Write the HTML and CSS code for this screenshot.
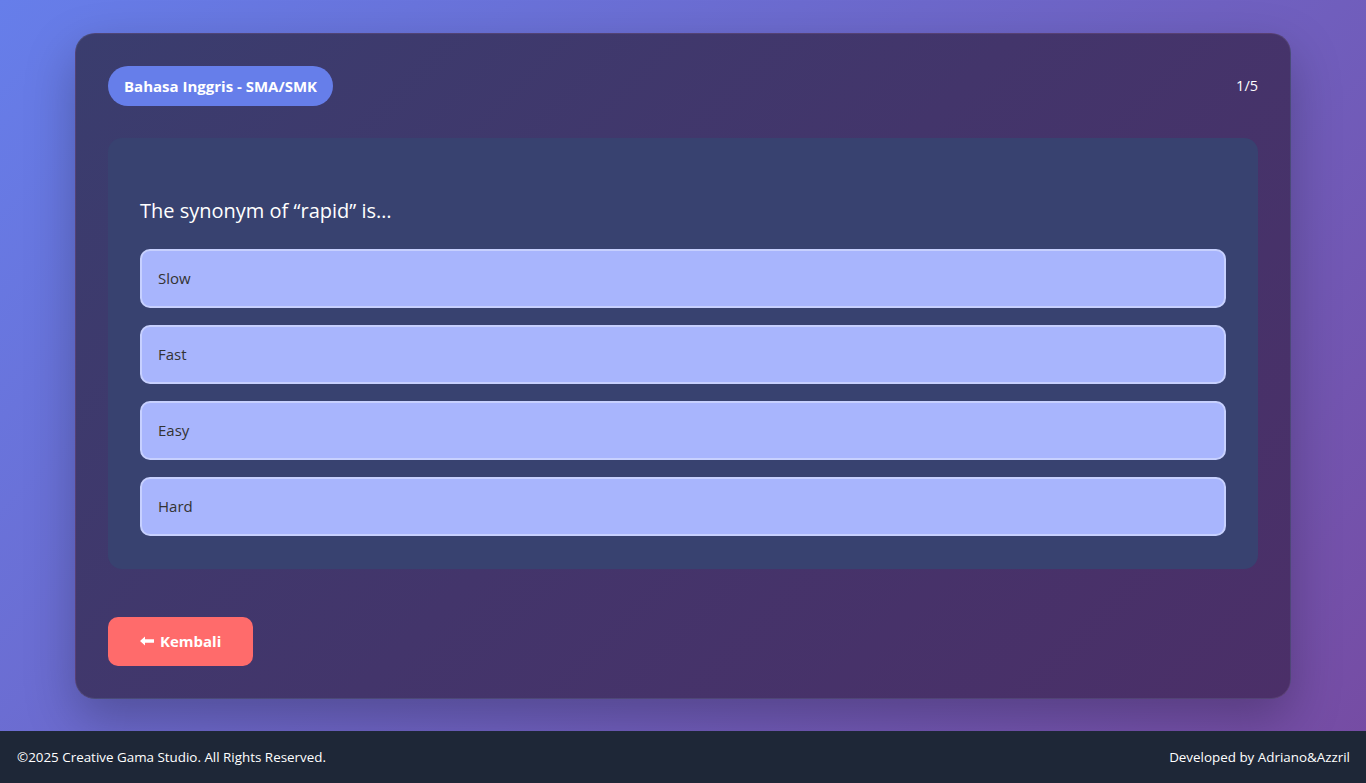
FILE: index.html
```html
<!DOCTYPE html>
<html lang="id">
<head>
<meta charset="utf-8">
<title>Kuis Bahasa Inggris</title>
<link rel="stylesheet" href="styles.css">
</head>
<body>
<main class="page">
  <section class="card">
    <header class="card-head">
      <span class="badge">Bahasa Inggris - SMA/SMK</span>
      <span class="counter">1/5</span>
    </header>
    <div class="quiz">
      <h2 class="question">The synonym of “rapid” is…</h2>
      <div class="options">
        <button class="option">Slow</button>
        <button class="option">Fast</button>
        <button class="option">Easy</button>
        <button class="option">Hard</button>
      </div>
    </div>
    <div class="actions">
      <button class="back"><svg class="back-icon" viewBox="0 0 14 10" width="14" height="10"><path d="M0 5 L5 0.5 L5 3.3 L14 3.3 L14 6.7 L5 6.7 L5 9.5 Z" fill="#fff"/></svg>Kembali</button>
    </div>
  </section>
</main>
<footer class="footer">
  <span>©2025 Creative Gama Studio. All Rights Reserved.</span>
  <span>Developed by Adriano&amp;Azzril</span>
</footer>
</body>
</html>
```
FILE: styles.css
```css
* { box-sizing: border-box; }
html, body { margin: 0; padding: 0; }
body {
  font-family: "Open Sans", "Noto Sans", sans-serif;
  height: 783px;
  display: flex;
  flex-direction: column;
  background: linear-gradient(135deg, #667eea 0%, #764ba2 100%);
  color: #fff;
}
.page {
  flex: 1;
  display: flex;
  align-items: center;
  justify-content: center;
}
.card {
  width: 1216px;
  padding: 32px 32px 32px;
  border-radius: 20px;
  background: linear-gradient(135deg, #3a3d6e 0%, #43356b 50%, #4b2f68 100%);
  border: 1px solid rgba(255, 255, 255, 0.08);
  box-shadow: 0 20px 50px rgba(0, 0, 0, 0.25);
}
.card-head {
  display: flex;
  align-items: center;
  justify-content: space-between;
  height: 40px;
}
.badge {
  background: #667eea;
  color: #fff;
  font-weight: 700;
  font-size: 15px;
  height: 40px;
  line-height: 40px;
  padding: 0 16px;
  border-radius: 20px;
}
.counter {
  font-size: 14.5px;
}
.quiz {
  margin-top: 32px;
  background: #384270;
  border-radius: 14px;
  padding: 32px 32px 33px;
}
.question {
  margin: 26px 0 23px;
  font-size: 20px;
  font-weight: 400;
  line-height: 30px;
}
.options {
  display: flex;
  flex-direction: column;
  gap: 17px;
}
.option {
  height: 59px;
  background: #a8b5fd;
  border: 2px solid #c7d0fe;
  border-radius: 10px;
  padding: 0 16px;
  text-align: left;
  font-family: inherit;
  font-size: 15px;
  color: #333;
}
.actions {
  margin-top: 48px;
}
.back {
  display: inline-flex;
  align-items: center;
  gap: 6px;
  height: 49px;
  padding: 0 32px;
  background: #ff6b6b;
  color: #fff;
  border: none;
  border-radius: 10px;
  font-family: inherit;
  font-weight: 700;
  font-size: 15px;
}
.footer {
  height: 52px;
  background: #1e2737;
  display: flex;
  align-items: center;
  justify-content: space-between;
  padding: 0 16px 0 17px;
  font-size: 13.4px;
}
```
